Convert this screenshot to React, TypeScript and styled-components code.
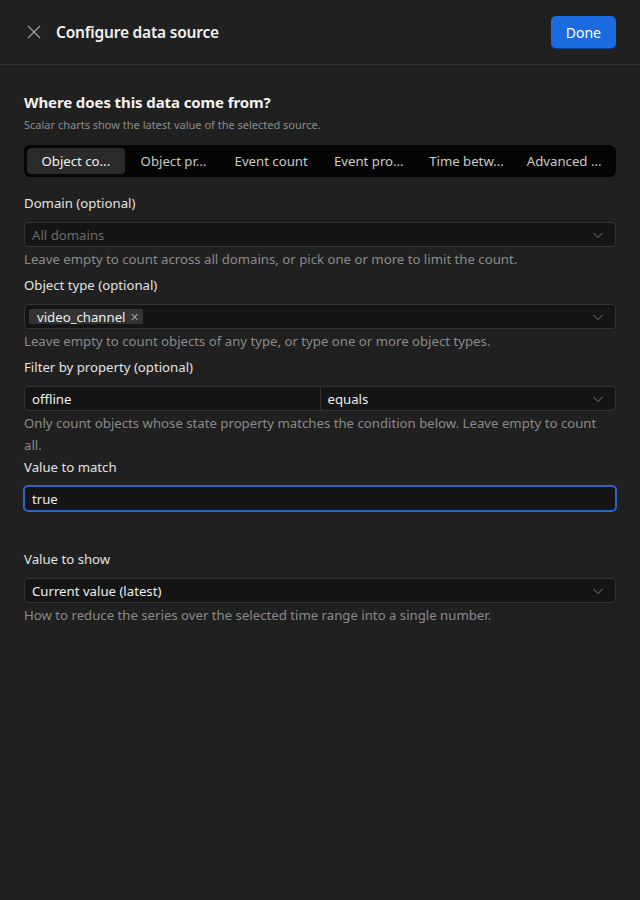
import React from "react";
import styled, { createGlobalStyle } from "styled-components";

const GlobalStyle = createGlobalStyle`
  html, body {
    margin: 0;
    padding: 0;
    background: #202020;
  }
  body {
    font-family: "Noto Sans", "Open Sans", sans-serif;
    color: #e6e6e6;
  }
`;

const Page = styled.div`
  width: 640px;
  min-height: 900px;
  background: #202020;
`;

const Header = styled.header`
  display: flex;
  align-items: center;
  justify-content: space-between;
  height: 65px;
  padding: 0 24px;
  box-sizing: border-box;
  border-bottom: 1px solid #333333;
`;

const HeaderLeft = styled.div`
  display: flex;
  align-items: center;
  gap: 12px;
`;

const CloseButton = styled.button`
  display: flex;
  align-items: center;
  justify-content: center;
  width: 20px;
  height: 20px;
  padding: 0;
  border: none;
  background: transparent;
  color: #9a9a9a;
  cursor: pointer;
`;

const Title = styled.h1`
  margin: 0;
  font-size: 15.5px;
  font-weight: 600;
  color: #f0f0f0;
  letter-spacing: -0.2px;
`;

const DoneButton = styled.button`
  height: 32px;
  padding: 0 15px;
  border: none;
  border-radius: 5px;
  background: #1a6be0;
  color: #ffffff;
  font-family: inherit;
  font-size: 14px;
  box-shadow: 0 1px 0 #0e3f8a;
`;

const Body = styled.main`
  padding: 27px 24px;
  display: flex;
  flex-direction: column;
`;

const SectionTitle = styled.h2`
  margin: 0;
  font-size: 15px;
  font-weight: 700;
  color: #f2f2f2;
  letter-spacing: -0.1px;
`;

const SectionHint = styled.p`
  margin: 5px 0 0;
  font-size: 11px;
  color: #8c8c8c;
`;

const Tabs = styled.div`
  display: grid;
  grid-template-columns: repeat(6, 1fr);
  margin-top: 13px;
  padding: 3px;
  background: #050505;
  border-radius: 6px;
`;

const Tab = styled.div<{ $active?: boolean }>`
  height: 26px;
  display: flex;
  align-items: center;
  justify-content: center;
  border-radius: 4px;
  font-size: 13.2px;
  color: ${(p) => (p.$active ? "#f0f0f0" : "#cacaca")};
  background: ${(p) => (p.$active ? "#2a2a2a" : "transparent")};
  white-space: nowrap;
  overflow: hidden;
`;

const Field = styled.div<{ $gap?: number }>`
  display: flex;
  flex-direction: column;
  margin-top: ${(p) => p.$gap ?? 0}px;
`;

const Label = styled.label`
  font-size: 13.2px;
  color: #e2e2e2;
  line-height: 22px;
  margin-bottom: 8px;
`;

const Help = styled.div`
  font-size: 13.2px;
  color: #8a8a8a;
  line-height: 22px;
  margin-top: 1px;
`;

const Control = styled.div<{ $focused?: boolean }>`
  display: flex;
  align-items: center;
  height: 25px;
  box-sizing: border-box;
  padding: 0 7px;
  background: #151515;
  border: 1px solid ${(p) => (p.$focused ? "#2c63c4" : "#333333")};
  box-shadow: ${(p) => (p.$focused ? "0 0 0 1px #2c63c4" : "none")};
  border-radius: 4px;
  font-size: 13.2px;
  color: #eeeeee;
`;

const Value = styled.span<{ $placeholder?: boolean }>`
  flex: 1;
  color: ${(p) => (p.$placeholder ? "#6a6a6a" : "#eeeeee")};
  white-space: nowrap;
`;

const Split = styled.div`
  display: flex;

  & > ${Control} {
    flex: 1;
  }
  & > ${Control}:first-child {
    border-radius: 4px 0 0 4px;
  }
  & > ${Control}:last-child {
    border-radius: 0 4px 4px 0;
    border-left: none;
  }
`;

const Chip = styled.span`
  display: inline-flex;
  align-items: center;
  gap: 4px;
  height: 15px;
  padding: 0 4px 0 8px;
  margin-left: -3px;
  background: #333333;
  border-radius: 2px;
  font-size: 13.2px;
  color: #eeeeee;
`;

const ChipClose = styled.span`
  color: #9a9a9a;
  font-size: 11px;
`;

const Chevron = () => (
  <svg width="12" height="12" viewBox="0 0 12 12" style={{ marginRight: 4 }}>
    <path d="M1.5 4 L6 8.5 L10.5 4" fill="none" stroke="#777" strokeWidth="1" />
  </svg>
);

const CloseIcon = () => (
  <svg width="14" height="14" viewBox="0 0 14 14">
    <path d="M1 1 L13 13 M13 1 L1 13" stroke="currentColor" strokeWidth="1.3" />
  </svg>
);

const tabs = [
  "Object co...",
  "Object pr...",
  "Event count",
  "Event pro...",
  "Time betw...",
  "Advanced ...",
];

export default function App() {
  return (
    <Page>
      <GlobalStyle />
      <Header>
        <HeaderLeft>
          <CloseButton aria-label="Close">
            <CloseIcon />
          </CloseButton>
          <Title>Configure data source</Title>
        </HeaderLeft>
        <DoneButton>Done</DoneButton>
      </Header>
      <Body>
        <SectionTitle>Where does this data come from?</SectionTitle>
        <SectionHint>Scalar charts show the latest value of the selected source.</SectionHint>
        <Tabs>
          {tabs.map((t, i) => (
            <Tab key={t} $active={i === 0}>
              {t}
            </Tab>
          ))}
        </Tabs>

        <Field $gap={15}>
          <Label>Domain (optional)</Label>
          <Control>
            <Value $placeholder>All domains</Value>
            <Chevron />
          </Control>
          <Help>Leave empty to count across all domains, or pick one or more to limit the count.</Help>
        </Field>

        <Field $gap={4}>
          <Label>Object type (optional)</Label>
          <Control>
            <Value>
              <Chip>
                video_channel<ChipClose>✕</ChipClose>
              </Chip>
            </Value>
            <Chevron />
          </Control>
          <Help>Leave empty to count objects of any type, or type one or more object types.</Help>
        </Field>

        <Field $gap={4}>
          <Label>Filter by property (optional)</Label>
          <Split>
            <Control>
              <Value>offline</Value>
            </Control>
            <Control>
              <Value>equals</Value>
              <Chevron />
            </Control>
          </Split>
          <Help>
            Only count objects whose state property matches the condition below. Leave empty to count
            all.
          </Help>
        </Field>

        <Field $gap={0}>
          <Label>Value to match</Label>
          <Control $focused>
            <Value>true</Value>
          </Control>
        </Field>

        <Field $gap={37}>
          <Label>Value to show</Label>
          <Control>
            <Value>Current value (latest)</Value>
            <Chevron />
          </Control>
          <Help>How to reduce the series over the selected time range into a single number.</Help>
        </Field>
      </Body>
    </Page>
  );
}
